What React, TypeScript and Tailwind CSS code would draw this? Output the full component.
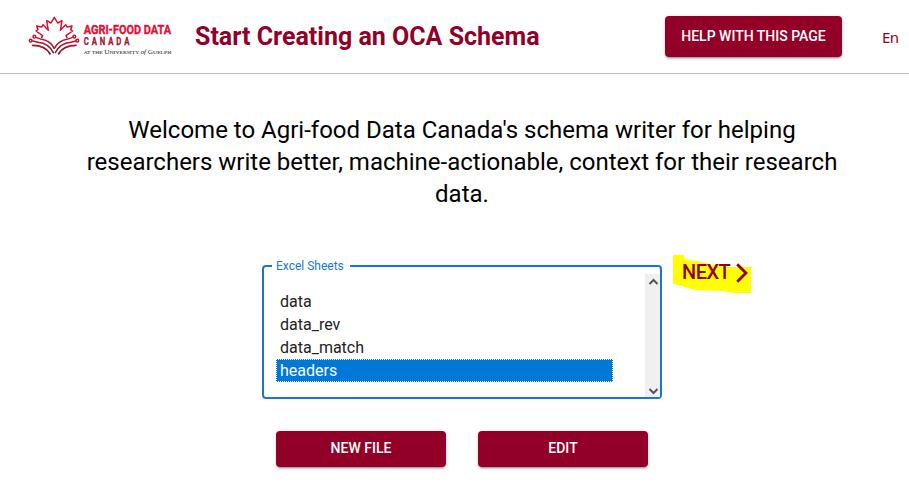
function Logo() {
  return (
    <svg width="160" height="56" viewBox="0 0 480 168" fill="none" role="img" aria-label="Agri-Food Data Canada">
      <defs>
        <linearGradient id="leaf" x1="0" y1="28" x2="0" y2="138" gradientUnits="userSpaceOnUse">
          <stop offset="0" stopColor="#e5062f" />
          <stop offset="0.55" stopColor="#d00d32" />
          <stop offset="1" stopColor="#7d1424" />
        </linearGradient>
      </defs>
      <g stroke="url(#leaf)" strokeWidth="4.4" strokeLinejoin="round" strokeLinecap="round">
        <path d="M65 89 L68 83 L48 69 L54 65 L50 54 L65 57 L69 50 L85 67 L80 38 L93 45 L103 28 L113 45 L126 38 L121 67 L137 50 L141 57 L156 54 L152 65 L158 69 L138 83 L141 89" />
        <path d="M103 121 C95 105 82 97 65 94 L48 88" />
        <path d="M103 121 C111 105 124 97 141 94 L158 88" />
        <path d="M100 134 C90 114 74 105 54 103 L38 99" />
        <path d="M106 134 C116 114 132 105 152 103 L168 99" />
        <path d="M90 137 C80 120 62 112 38 112" strokeWidth="5.5" />
        <path d="M116 137 C126 120 144 112 168 112" strokeWidth="5.5" />
        <circle cx="43" cy="86" r="4" />
        <circle cx="163" cy="86" r="4" />
        <circle cx="32" cy="98" r="4" />
        <circle cx="172" cy="98" r="4" />
      </g>
      <text transform="translate(191 78) scale(0.8 1)" textLength="328" lengthAdjust="spacingAndGlyphs" fill="#df1237" stroke="#df1237" strokeWidth="1.2" className="font-[Roboto,sans-serif] text-[41px] font-bold">AGRI-FOOD DATA</text>
      <text transform="translate(191 111) scale(0.78 1)" textLength="176" fill="#a31631" stroke="#a31631" strokeWidth="0.8" className="font-[Roboto,sans-serif] text-[30px] font-bold">CANADA</text>
      <text x="191" y="139" textLength="263" lengthAdjust="spacingAndGlyphs" fill="#333" stroke="#333" strokeWidth="0.2" className="font-['Liberation_Serif',serif] text-[19px]">
        <tspan className="text-[15px]">AT THE </tspan>U<tspan className="text-[15px]">NIVERSITY </tspan><tspan fontStyle="italic">of </tspan>G<tspan className="text-[15px]">UELPH</tspan>
      </text>
    </svg>
  );
}

const sheets = ["data", "data_rev", "data_match", "headers"];
const raised = "rounded bg-[#920028] text-sm font-medium text-white shadow-[0_3px_1px_-2px_rgba(0,0,0,0.2),0_2px_2px_rgba(0,0,0,0.14),0_1px_5px_rgba(0,0,0,0.12)]";

export default function App() {
  return (
    <div className="h-[487px] w-[909px] overflow-hidden bg-white font-[Roboto,sans-serif] text-black">
      <header className="flex h-[74px] items-start border-b border-[#bdbdbd] pl-5">
        <div className="mt-2 w-[175px] shrink-0"><Logo /></div>
        <h1 className="mt-[19px] w-[470px] text-[25px] leading-9 font-bold whitespace-nowrap text-[#920028]">Start Creating an OCA Schema</h1>
        <button className={`mt-4 h-[41px] w-[177px] shrink-0 whitespace-nowrap pb-px ${raised}`}>HELP WITH THIS PAGE</button>
        <span className="mt-[25px] ml-10 font-['Noto_Sans',sans-serif] text-[15px] leading-6 tracking-[-0.5px] text-[#920028]">En</span>
      </header>
      <main>
        <p className="mt-10 ml-[62px] w-[800px] text-center text-2xl leading-8">
          Welcome to Agri-food Data Canada's schema writer for helping<br />
          researchers write better, machine-actionable, context for their research<br />
          data.
        </p>
        <div className="mt-[55px] ml-[262px] flex items-start">
          <div className="relative flex h-[134px] w-[400px] justify-between rounded border-2 border-[#1976d2]">
            <span className="absolute -top-2 left-2 bg-white pr-[6px] pl-1 text-xs leading-[14px] text-[#1976d2]">Excel Sheets</span>
            <ul className="mt-[23px] ml-3 w-[337px] text-base leading-[23px] text-[#212121]">
              {sheets.map((name) => (
                <li key={name} className={name === "headers" ? "h-[23px] border border-dotted border-white bg-[#0078d7] pl-[3px] leading-[21px] text-white" : "h-[23px] pl-1"}>{name}</li>
              ))}
            </ul>
            <div className="mt-[7px] flex w-[15px] flex-col items-center justify-between bg-[#f0f0f0] pt-1 pb-[2px] pl-[2px]">
              <svg width="11" height="8" viewBox="0 0 11 8" fill="none" stroke="#555" strokeWidth="2"><path d="M1.5 6 L5.5 2 L9.5 6" /></svg>
              <svg width="11" height="8" viewBox="0 0 11 8" fill="none" stroke="#555" strokeWidth="2"><path d="M1.5 2 L5.5 6 L9.5 2" /></svg>
            </div>
          </div>
          <div className="relative -mt-[10px] ml-[11px] h-[38px] w-[79px]">
            <svg className="absolute inset-0" width="79" height="38" viewBox="0 0 79 38"><path fill="#ff0" d="M0 0 H11 V2 L14 5 L25 6 L36 9 L50 12 H78 V38 H61 L50 36 L22 35 L5 30 L0 29 Z" /></svg>
            <button className="relative flex items-center pt-1 pl-[9px] text-xl leading-[26px] font-medium tracking-[-0.5px] text-[#920018]">
              NEXT
              <svg className="mt-[2px] ml-[6px]" width="12" height="20" viewBox="0 0 12 20" fill="none" stroke="#920018" strokeWidth="2.8"><path d="M1.2 1.2 L10 10 L1.2 18.8" /></svg>
            </button>
          </div>
        </div>
        <div className="mt-8 ml-[276px] flex gap-8">
          <button className={`h-9 w-[170px] pb-[2px] ${raised}`}>NEW FILE</button>
          <button className={`h-9 w-[170px] pb-[2px] ${raised}`}>EDIT</button>
        </div>
      </main>
    </div>
  );
}
